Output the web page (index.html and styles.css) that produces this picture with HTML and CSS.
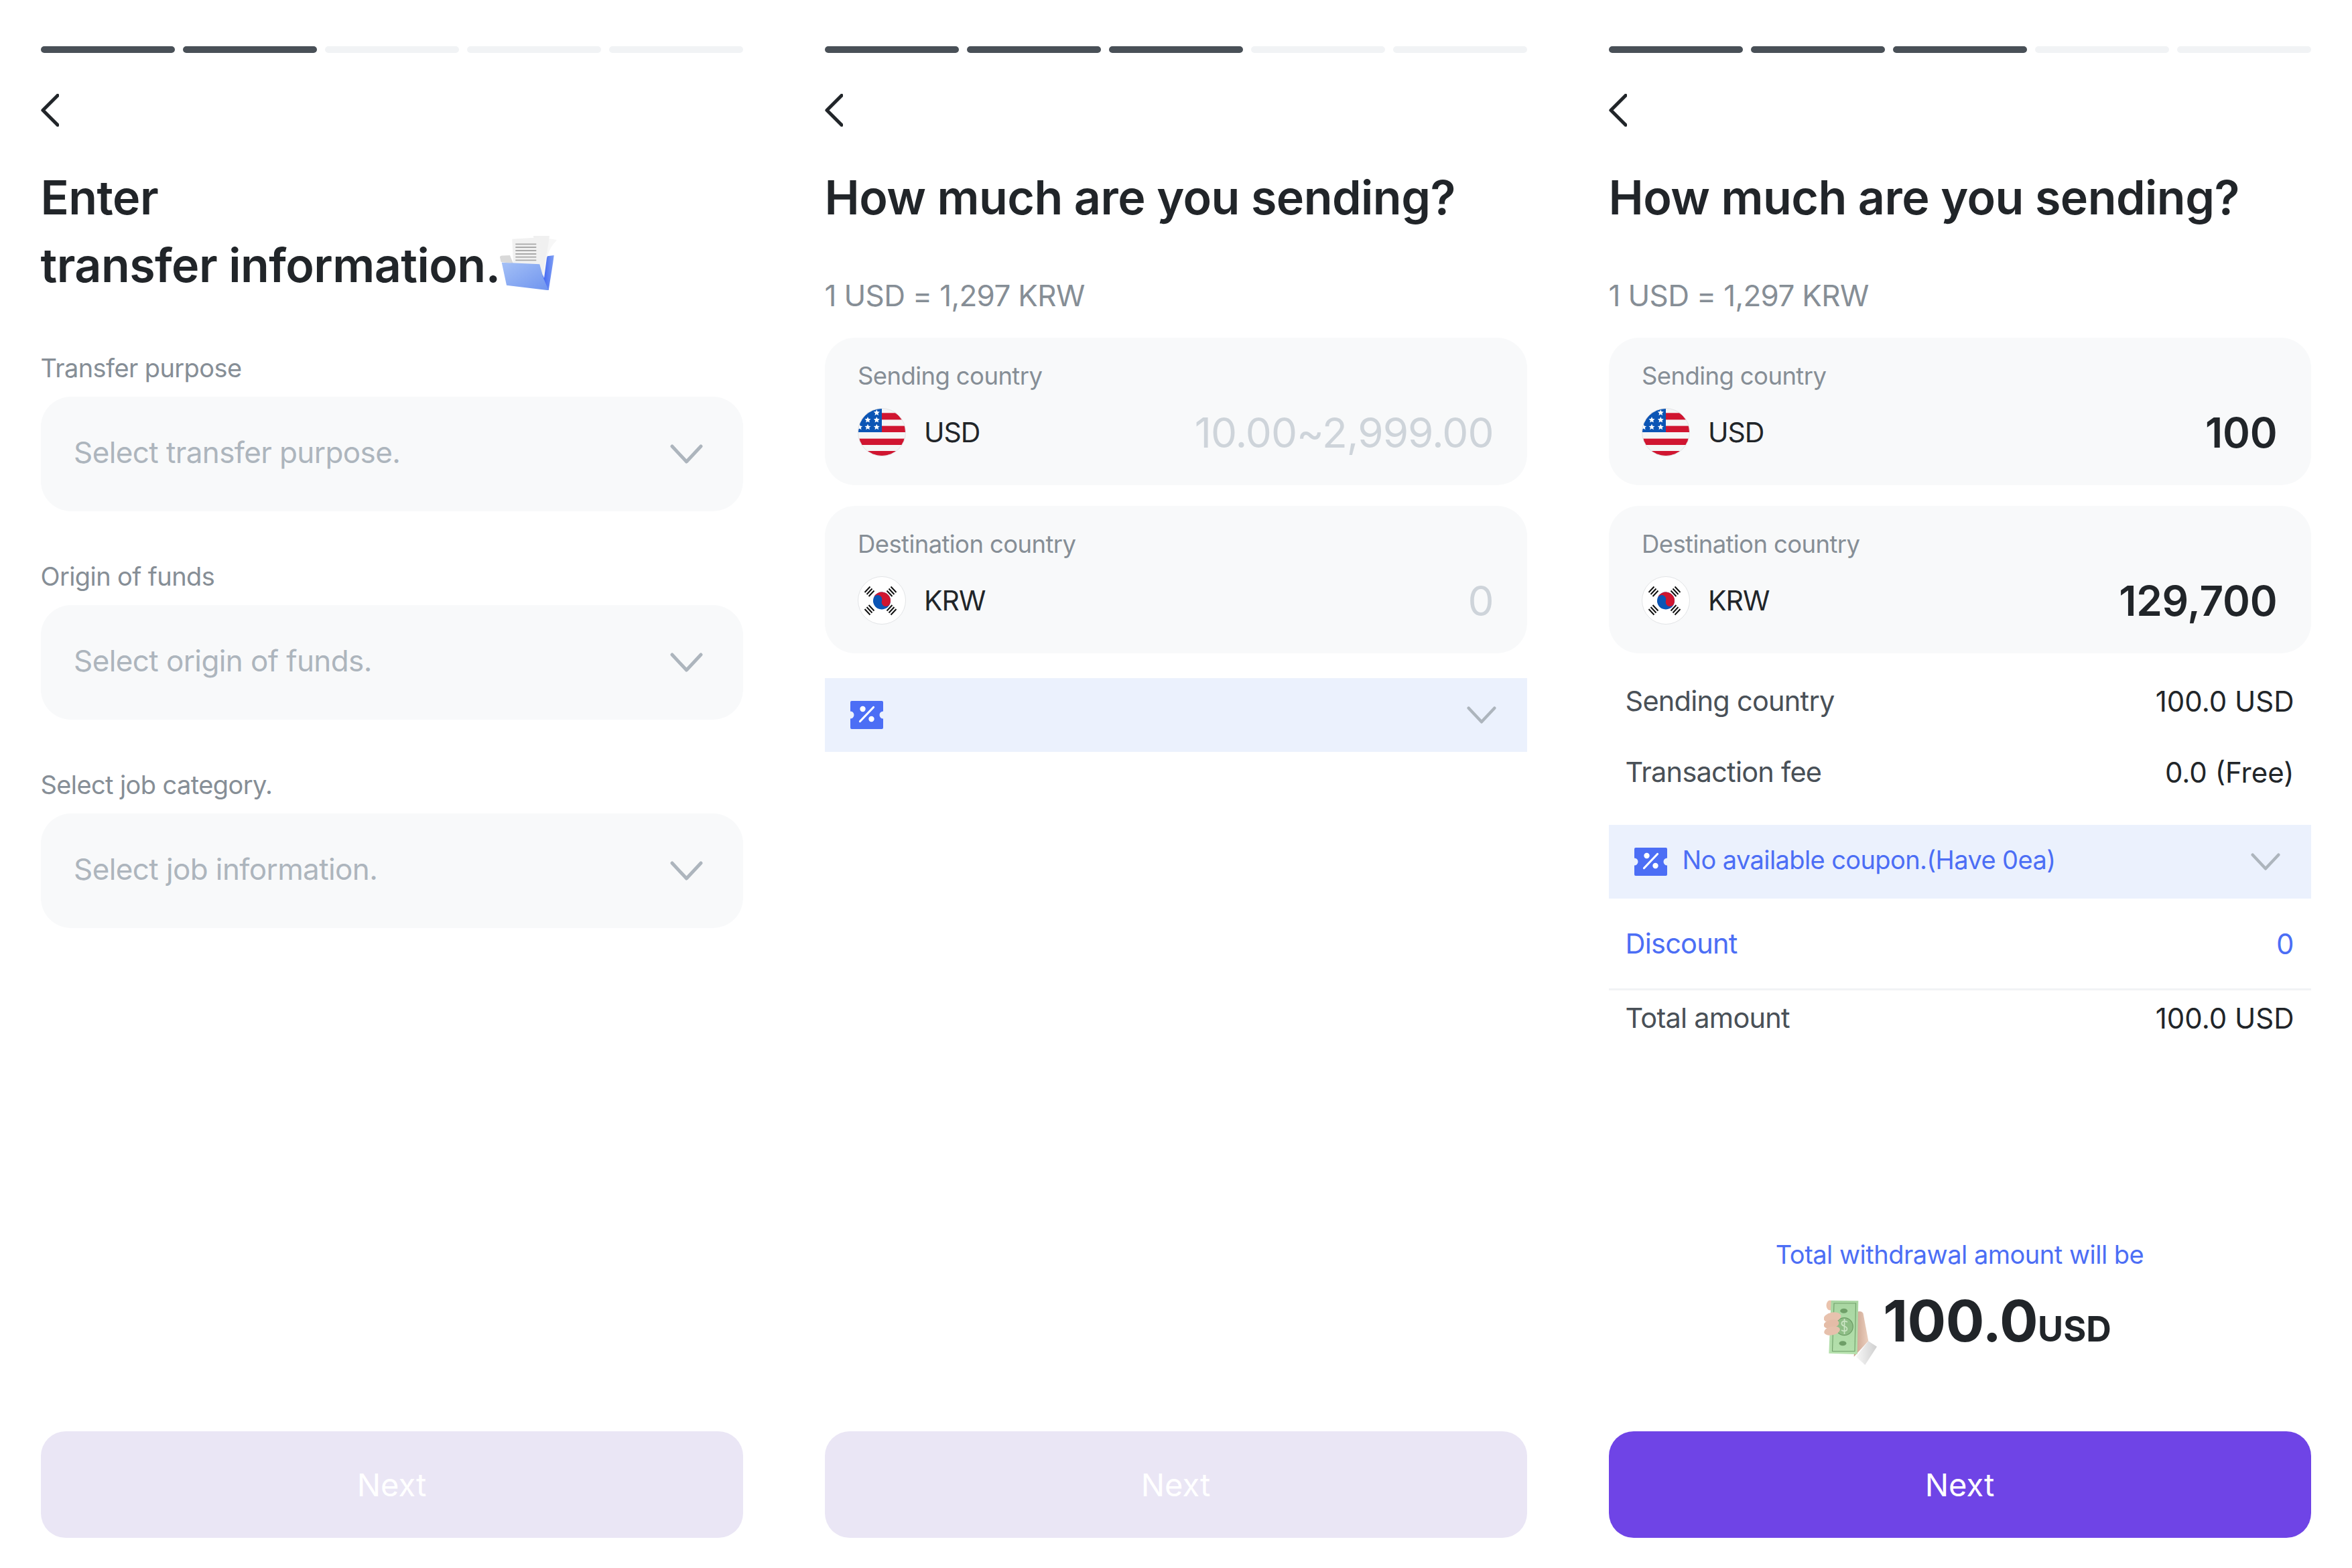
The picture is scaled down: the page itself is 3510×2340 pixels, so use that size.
FILE: index.html
```html
<!DOCTYPE html>
<html lang="en">
<head>
<meta charset="utf-8">
<title>Transfer</title>
<link rel="stylesheet" href="styles.css">
</head>
<body>
<svg class="defs" width="0" height="0" aria-hidden="true">
  <defs>
    <symbol id="chev" viewBox="0 0 49 29"><path d="M3 3 L24.500 26 L46 3" fill="none" stroke="currentColor" stroke-width="5" stroke-linecap="round" stroke-linejoin="round"/></symbol>
    <symbol id="back" viewBox="0 0 27 49"><path d="M25 2.500 L3 24.500 L25 46.500" fill="none" stroke="#212529" stroke-width="5.200" stroke-linecap="round" stroke-linejoin="round"/></symbol>
    <symbol id="coupon" viewBox="0 0 49 42"><path d="M2 0H47a2 2 0 0 1 2 2V15.500a5.500 5.500 0 0 0 0 11V40a2 2 0 0 1-2 2H2a2 2 0 0 1-2-2V26.500a5.500 5.500 0 0 0 0-11V2a2 2 0 0 1 2-2Z" fill="#4c6ef5"/><circle cx="18.500" cy="12" r="4.200" fill="#fff"/><circle cx="31.500" cy="27" r="4.200" fill="#fff"/><path d="M14.500 30.500 L34.500 9.500" stroke="#fff" stroke-width="3.200" stroke-linecap="round"/></symbol>
    <symbol id="us" viewBox="0 0 72 72">
      <clipPath id="uc"><circle cx="36" cy="36" r="35.500"/></clipPath>
      <g clip-path="url(#uc)">
        <rect width="72" height="72" fill="#f5f5f5"/>
        <rect y="7.300" width="72" height="10" fill="#d01530"/>
        <rect y="26.600" width="72" height="9.400" fill="#d01530"/>
        <rect y="45.600" width="72" height="9.400" fill="#d01530"/>
        <rect y="64" width="72" height="8" fill="#d01530"/>
        <rect width="36" height="36" fill="#0b55b5"/>
        <g fill="#fff">
          <path d="M28.300 2.300 l1.300 3 3.200.3-2.400 2.100.7 3.200-2.800-1.700-2.800 1.700.7-3.200-2.400-2.100 3.200-.3Z"/>
          <path d="M15 13 l1.300 3 3.200.3-2.400 2.100.7 3.200-2.800-1.700-2.800 1.700.7-3.200-2.400-2.100 3.200-.3Z"/>
          <path d="M28.300 13 l1.300 3 3.200.3-2.400 2.100.7 3.200-2.800-1.700-2.800 1.700.7-3.200-2.400-2.100 3.200-.3Z"/>
          <path d="M2.700 23.700 l1.300 3 3.200.3-2.400 2.100.7 3.200-2.800-1.700-2.800 1.700.7-3.200-2.400-2.100 3.200-.3Z"/>
          <path d="M15 23.700 l1.300 3 3.200.3-2.400 2.100.7 3.200-2.800-1.700-2.800 1.700.7-3.200-2.400-2.100 3.200-.3Z"/>
          <path d="M28.300 23.700 l1.300 3 3.200.3-2.400 2.100.7 3.200-2.800-1.700-2.800 1.700.7-3.200-2.400-2.100 3.200-.3Z"/>
        </g>
      </g>
      <circle cx="36" cy="36" r="35.500" fill="none" stroke="#e2e4e6" stroke-width="1"/>
    </symbol>
    <symbol id="kr" viewBox="0 0 72 72">
      <circle cx="36" cy="36" r="35.500" fill="#fff" stroke="#e2e4e6" stroke-width="1"/>
      <g transform="rotate(18 36 36.500)">
        <circle cx="36" cy="36.500" r="13" fill="#0b55b5"/>
        <path d="M23 36.500a13 13 0 0 1 26 0a6.500 6.500 0 0 1-13 0a6.500 6.500 0 0 0-13 0Z" fill="#d01530"/>
      </g>
      <g stroke="#111" stroke-width="2" fill="none">
        <path d="M10.500 24 L18.500 15.500M13.500 27 L21.500 18.500M16.500 30 L24.500 21.500"/>
        <path d="M47.500 15.500 L55.500 24M50.500 12.500 L58.500 21M44.500 18.500 L52.500 27" transform="translate(-1 3)"/>
        <path d="M10.500 49 L18.500 57.500M13.500 46 L21.500 54.500M16.500 43 L24.500 51.500"/>
        <path d="M47.500 57.500 L55.500 49M50.500 60.500 L58.500 52M44.500 54.500 L52.500 46" transform="translate(-1 -3)"/>
      </g>
    </symbol>
  </defs>
</svg>
<main class="screens">

  <section class="panel">
    <div class="steps"><i class="on"></i><i class="on"></i><i></i><i></i><i></i></div>
    <svg class="back"><use href="#back"/></svg>
    <h1 class="title">Enter<br>transfer information.<svg class="folder" viewBox="0 0 85 82" aria-hidden="true">
      <defs>
        <linearGradient id="ff" x1="0" y1="0" x2="1" y2="1"><stop offset="0" stop-color="#a4c0f6"/><stop offset="1" stop-color="#6f94ef"/></linearGradient>
        <linearGradient id="fb" x1="0" y1="0" x2="1" y2="0"><stop offset="0" stop-color="#3c62f2"/><stop offset="1" stop-color="#7f9ff3"/></linearGradient>
      </defs>
      <path d="M63.300 32.300 L80.700 30 L79.300 40.700 L72.700 82.300 L63.300 77.300Z" fill="url(#fb)"/>
      <path d="M56 2 L85 7 Q74 18 70 34 L66 64 L56 40Z" fill="#f7f7f7"/>
      <path d="M50 1 L74 1 Q72 18 68 36 L64 60 L54 40Z" fill="#f0f0f0"/>
      <path d="M18.300 5.700 L60 3.300 L60.700 42.300 L62.700 64 L20 44Z" fill="#f1f1f1"/>
      <g stroke="#a9a9a9" stroke-width="1.800"><path d="M23.300 13.300H54.300M23.300 18H54.300M23.300 23H54.300M23.300 28H54.300M23.300 32.700H54.300M23.300 37.300H54.300"/></g>
      <path d="M0 33 Q0 30.500 3 30.500 L15 30 L20 42.300 L1.700 40Z" fill="#d9d9d9"/>
      <path d="M2.700 40.700 L59.300 43.300 L65 64 L72.700 82.300 L10 74.700Z" fill="url(#ff)"/>
    </svg></h1>
    <label class="field-label first">Transfer purpose</label>
    <div class="select"><span>Select transfer purpose.</span><svg class="chev"><use href="#chev"/></svg></div>
    <label class="field-label">Origin of funds</label>
    <div class="select"><span>Select origin of funds.</span><svg class="chev"><use href="#chev"/></svg></div>
    <label class="field-label">Select job category.</label>
    <div class="select"><span>Select job information.</span><svg class="chev"><use href="#chev"/></svg></div>
    <button class="next" disabled>Next</button>
  </section>

  <section class="panel">
    <div class="steps"><i class="on"></i><i class="on"></i><i class="on"></i><i></i><i></i></div>
    <svg class="back"><use href="#back"/></svg>
    <h1 class="title">How much are you sending?</h1>
    <p class="rate">1 USD = 1,297 KRW</p>
    <div class="card">
      <div class="card-label">Sending country</div>
      <div class="card-row"><svg class="flag"><use href="#us"/></svg><span class="cur">USD</span><span class="amt muted">10.00~2,999.00</span></div>
    </div>
    <div class="card">
      <div class="card-label">Destination country</div>
      <div class="card-row"><svg class="flag"><use href="#kr"/></svg><span class="cur">KRW</span><span class="amt muted">0</span></div>
    </div>
    <div class="coupon spaced"><svg class="coupon-ico"><use href="#coupon"/></svg><svg class="chev small"><use href="#chev"/></svg></div>
    <button class="next" disabled>Next</button>
  </section>

  <section class="panel">
    <div class="steps"><i class="on"></i><i class="on"></i><i class="on"></i><i></i><i></i></div>
    <svg class="back"><use href="#back"/></svg>
    <h1 class="title">How much are you sending?</h1>
    <p class="rate">1 USD = 1,297 KRW</p>
    <div class="card">
      <div class="card-label">Sending country</div>
      <div class="card-row"><svg class="flag"><use href="#us"/></svg><span class="cur">USD</span><span class="amt">100</span></div>
    </div>
    <div class="card">
      <div class="card-label">Destination country</div>
      <div class="card-row"><svg class="flag"><use href="#kr"/></svg><span class="cur">KRW</span><span class="amt">129,700</span></div>
    </div>
    <div class="summary">
      <div class="row"><span>Sending country</span><b>100.0 USD</b></div>
      <div class="row"><span>Transaction fee</span><b>0.0 (Free)</b></div>
    </div>
    <div class="coupon"><svg class="coupon-ico"><use href="#coupon"/></svg><span class="coupon-text">No available coupon.(Have 0ea)</span><svg class="chev small"><use href="#chev"/></svg></div>
    <div class="row discount"><span>Discount</span><b>0</b></div>
    <div class="row total"><span>Total amount</span><b>100.0 USD</b></div>
    <div class="withdraw">
      <p class="withdraw-label">Total withdrawal amount will be</p>
      <div class="withdraw-amt">
        <svg class="hand" viewBox="0 0 80 98" aria-hidden="true">
          <defs>
            <linearGradient id="bill" x1="0" y1="0" x2="0" y2="1"><stop offset="0" stop-color="#a9d6a2"/><stop offset="1" stop-color="#b4e0ac"/></linearGradient>
            <linearGradient id="cuff" x1="0" y1="0" x2="1" y2="0"><stop offset="0" stop-color="#f7f7f7"/><stop offset="1" stop-color="#cfcfcf"/></linearGradient>
            <linearGradient id="skin" x1="0" y1="0" x2="1" y2="0"><stop offset="0" stop-color="#c9a08c"/><stop offset="1" stop-color="#ecd0bf"/></linearGradient>
          </defs>
          <ellipse cx="9" cy="8" rx="5.500" ry="7.500" fill="#eac3ad"/>
          <path d="M48 18 Q56 15 58.500 20 L66.300 61.300 L44.700 84.700Z" fill="url(#skin)"/>
          <path d="M10.700 .7 L51.300 1.300 L49.700 81 L7.300 79.700Z" fill="url(#bill)"/>
          <path d="M15 5 H47.500 L46 76.500 H12.500Z" fill="none" stroke="#74a46e" stroke-width="1.200"/>
          <circle cx="30.300" cy="39.700" r="13" fill="#8dbd85" stroke="#6d9c66" stroke-width="1.200"/>
          <ellipse cx="29.700" cy="16.300" rx="5.500" ry="3.500" fill="#6f9f68"/>
          <ellipse cx="28" cy="64.700" rx="5.500" ry="3.500" fill="#6f9f68"/>
          <path d="M35 33 Q30 30 27 33 Q25 37 30 39 Q36 41 34 45 Q31 48 26 45M30.500 28V51" fill="none" stroke="#c9e4c2" stroke-width="1.800"/>
          <ellipse cx="12.500" cy="26" rx="13" ry="7.500" fill="#e8c2ae" transform="rotate(-12 12.500 26)"/>
          <ellipse cx="11" cy="36" rx="11.500" ry="6.500" fill="#e4bca7" transform="rotate(-12 11 36)"/>
          <ellipse cx="12" cy="46" rx="12" ry="6.500" fill="#e6c0ac" transform="rotate(-12 12 46)"/>
          <path d="M66.300 61.300 L79 69.700 L61.300 97 L48 84.700Z" fill="url(#cuff)"/>
        </svg>
        <span class="big">100.0<small>USD</small></span>
      </div>
    </div>
    <button class="next active">Next</button>
  </section>

</main>
</body>
</html>
```
FILE: styles.css
```css
* { box-sizing: border-box; }
html, body { margin: 0; padding: 0; background: #fff; }
body { font-family: Inter, "Noto Sans", sans-serif; color: #212529; }
.defs { position: absolute; }
.screens { display: flex; gap: 122px; padding-left: 60.5px; width: 3510px; height: 2340px; overflow: hidden; }
.panel { width: 1048px; flex: none; display: flex; flex-direction: column; padding: 69px 0 45px; }
.steps { display: flex; gap: 12px; height: 10px; }
.steps i { flex: 1; border-radius: 5px; background: #f1f3f5; }
.steps i.on { background: #495057; }
.back { display: block; width: 27px; height: 49px; margin-top: 61px; flex: none; }
.title { margin: 55px 0 0; font-size: 70px; line-height: 101px; font-weight: 600; letter-spacing: -0.55px; }
.folder { width: 85px; height: 82px; vertical-align: -12px; }
.field-label { display: block; height: 50px; margin-top: 72px; font-size: 38px; line-height: 50px; letter-spacing: -0.6px; color: #868e96; }
.field-label.first { margin-top: 78px; }
.select { height: 171px; margin-top: 18px; border-radius: 45px; background: #f8f9fa; padding: 0 60px 0 49.5px; display: flex; align-items: center; justify-content: space-between; font-size: 44px; letter-spacing: -0.6px; color: #adb5bd; flex: none; }
.select span { margin-bottom: 6px; }
.chev { width: 49px; height: 29px; color: #adb5bd; flex: none; }
.chev.small { width: 44px; height: 26px; margin-left: auto; }
.rate { margin: 66px 0 33px; height: 60px; font-size: 44px; line-height: 60px; letter-spacing: -0.65px; color: #868e96; }
.card { height: 220px; flex: none; padding: 32px 50px 0 49.5px; border-radius: 45px; background: #f8f9fa; }
.card + .card { margin-top: 31px; }
.card-label { height: 50px; font-size: 36.5px; line-height: 50px; letter-spacing: -0.6px; color: #868e96; }
.card-row { display: flex; align-items: center; height: 72px; margin-top: 23px; }
.flag { width: 72px; height: 72px; flex: none; }
.cur { margin-left: 27px; font-size: 41px; letter-spacing: -1px; color: #212529; }
.amt { margin-left: auto; font-size: 62px; font-weight: 600; letter-spacing: -0.2px; color: #212529; }
.amt.muted { font-weight: 400; letter-spacing: -1px; color: #ced4da; }
.coupon { height: 110px; flex: none; display: flex; align-items: center; padding: 0 46px 0 38px; background: #ebf1fd; }
.coupon.spaced { margin-top: 37px; }
.coupon-ico { width: 49px; height: 42px; flex: none; }
.coupon-text { margin: 0 0 6px 23px; font-size: 38px; letter-spacing: -0.6px; color: #4c6ef5; }
.summary { margin-top: 18px; margin-bottom: 26px; }
.row { display: flex; justify-content: space-between; align-items: center; height: 106px; padding: 0 25px; font-size: 41.5px; letter-spacing: -0.75px; color: #495057; flex: none; }
.row b { font-weight: 400; font-size: 42px; letter-spacing: 0; color: #212529; }
.discount { height: 137px; color: #4c6ef5; border-bottom: 3px solid #f1f3f5; }
.discount b { color: #4c6ef5; }
.total { height: 82px; }
.withdraw { margin-top: auto; padding-bottom: 98px; display: flex; flex-direction: column; align-items: center; }
.withdraw-label { margin: 0; height: 60px; font-size: 38px; line-height: 60px; letter-spacing: -0.5px; color: #4c6ef5; }
.withdraw-amt { display: flex; align-items: flex-start; gap: 8px; margin-top: 38px; height: 98px; padding-left: 24px; }
.hand { width: 80px; height: 98px; flex: none; }
.big { font-size: 85.5px; font-weight: 700; line-height: 62px; letter-spacing: -0.5px; }
.big small { font-size: 52px; font-weight: 700; letter-spacing: 0; }
.next { display: block; width: 100%; height: 159px; margin-top: auto; flex: none; border: 0; border-radius: 37px; background: #eae6f5; font-family: inherit; font-size: 47px; color: #fff; padding: 0; }
.withdraw + .next { margin-top: 0; }
.next.active { background: #6f44e6; }
```
